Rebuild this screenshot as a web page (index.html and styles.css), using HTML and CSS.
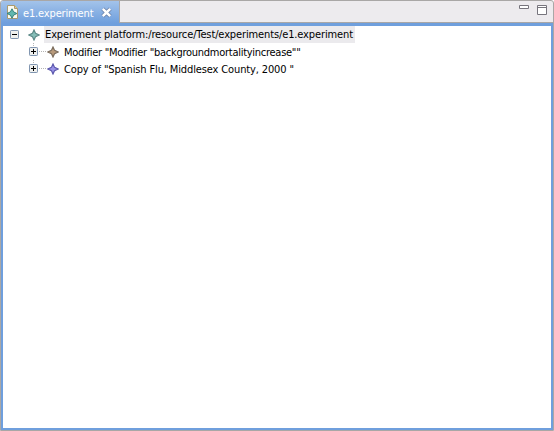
FILE: index.html
```html
<!DOCTYPE html>
<html lang="en">
<head>
<meta charset="utf-8">
<title>e1.experiment</title>
<link rel="stylesheet" href="styles.css">
</head>
<body>
<svg class="defs" width="0" height="0">
  <symbol id="star" viewBox="0 0 12 12"><path d="M6 1 7.6 4.4 11 6 7.6 7.6 6 11 4.4 7.6 1 6 4.4 4.4Z"/></symbol>
  <symbol id="minus" viewBox="0 0 9 9"><rect x=".5" y=".5" width="8" height="8" rx=".7" fill="#eff0ee" stroke="#8095b0"/><path d="M2 4.5h5" stroke="#000" fill="none"/></symbol>
  <symbol id="plus" viewBox="0 0 9 9"><rect x=".5" y=".5" width="8" height="8" rx=".7" fill="#eff0ee" stroke="#8095b0"/><path d="M2 4.5h5M4.5 2v5" stroke="#000" fill="none"/></symbol>
</svg>
<main class="editor">
  <header class="tabbar">
    <div class="tab">
      <svg class="file" width="13" height="16" viewBox="0 0 13 16">
        <path d="M1.5 1.5h7l3 3v10h-10z" fill="#fbfaf0" stroke="#a99a70"/>
        <path d="M8.5 1.5v3h3" fill="#e8cf8c" stroke="#a99a70"/>
        <path d="M6 4.8 7.6 7.9 10.9 9.5 7.6 11.1 6 14.2 4.4 11.1 1.1 9.5 4.4 7.9Z" fill="#62b8ae" stroke="#33807b"/>
      </svg>
      <span class="tab-title">e1.experiment</span>
      <svg class="close" width="11" height="11" viewBox="0 0 11 11">
        <path d="M1.8 1.8l7.4 7.4M9.2 1.8l-7.4 7.4" stroke="#637ba3" stroke-width="4" fill="none"/>
        <path d="M1.8 1.8l7.4 7.4M9.2 1.8l-7.4 7.4" stroke="#fff" stroke-width="2.6" fill="none"/>
      </svg>
    </div>
    <div class="controls">
      <svg width="10" height="10" viewBox="0 0 10 10"><path d="M.5.5h9v3h-9z" fill="#fff" stroke="#77757d"/></svg>
      <svg width="10" height="10" viewBox="0 0 10 10"><path d="M.5.5h9v9h-9zM.5 2.5h9" fill="#fff" stroke="#77757d"/></svg>
    </div>
  </header>
  <section class="tree">
    <div class="row root">
      <svg class="toggle" width="9" height="9"><use href="#minus"/></svg>
      <svg class="star teal" width="12" height="12"><use href="#star"/></svg>
      <span class="label selected">Experiment platform:/resource/Test/experiments/e1.experiment</span>
    </div>
    <div class="row child">
      <svg class="toggle" width="9" height="9"><use href="#plus"/></svg>
      <i class="link"></i>
      <svg class="star brown" width="12" height="12"><use href="#star"/></svg>
      <span class="label modifier">Modifier "Modifier "backgroundmortalityincrease""</span>
    </div>
    <div class="row child">
      <svg class="toggle" width="9" height="9"><use href="#plus"/></svg>
      <i class="link"></i>
      <svg class="star violet" width="12" height="12"><use href="#star"/></svg>
      <span class="label copy">Copy of "Spanish Flu, Middlesex County, 2000 "</span>
    </div>
  </section>
</main>
</body>
</html>
```
FILE: styles.css
```css
* { box-sizing: border-box; }
body {
  margin: 0;
  background: #fff;
  color: #000;
  font: 11px/17px "DejaVu Sans Condensed", "DejaVu Sans", sans-serif;
}
.defs { display: block; height: 0; }
.editor {
  width: 554px;
  height: 431px;
  display: flex;
  flex-direction: column;
  border: 1px solid #a9a7a6;
  border-radius: 3px 3px 0 0;
  background: #edebee;
}
.tabbar {
  height: 22px;
  flex: none;
  display: flex;
  justify-content: space-between;
}
.tab {
  width: 119px;
  height: 22px;
  display: flex;
  align-items: center;
  padding-left: 5px;
  border-right: 1px solid #a9a7a6;
  border-radius: 2px 0 0 0;
  background: linear-gradient(#a3c3ea, #6f9fdd);
  color: #fff;
}
.tab-title {
  margin: 2px 0 0 4px;
  width: 71px;
  white-space: nowrap;
  letter-spacing: -0.15px;
}
.close { margin-left: 7px; }
.controls {
  flex: 1;
  display: flex;
  justify-content: flex-end;
  gap: 8px;
  padding: 4px 6px 0 0;
  border-bottom: 1px solid #a9a7a6;
}
.tree {
  flex: 1;
  border: solid #6f9fdd;
  border-width: 3px 2px 2px;
  background: #fff;
}
.row {
  height: 17px;
  display: flex;
  align-items: center;
}
.root { padding-left: 7px; }
.root .star { margin: 0 4px 0 9px; }
.child {
  padding-left: 26px;
  background: repeating-linear-gradient(#b5b5b5 0 1px, transparent 1px 2px) 30px 0 / 1px 13px no-repeat;
}
.root .label { padding: 0 2px 0 1px; letter-spacing: -0.125px; }
.link {
  width: 7px;
  height: 1px;
  margin: 0 1px;
  background: repeating-linear-gradient(90deg, #b5b5b5 0 1px, transparent 1px 2px);
}
.star { overflow: visible; stroke-width: 1.2; }
.teal { fill: #85beb8; stroke: #5b8987; }
.brown { fill: #b99b7c; stroke: #7b6c5c; }
.violet { fill: #9a93e8; stroke: #5b57ac; }
.toggle, .star, .file, .close, .link { flex: none; }
.label { white-space: nowrap; }
.child .label { margin: 1px 0 0 5px; }
.modifier { letter-spacing: -0.27px; }
.copy { letter-spacing: -0.13px; }
.selected { background: #ebeaed; }
```
